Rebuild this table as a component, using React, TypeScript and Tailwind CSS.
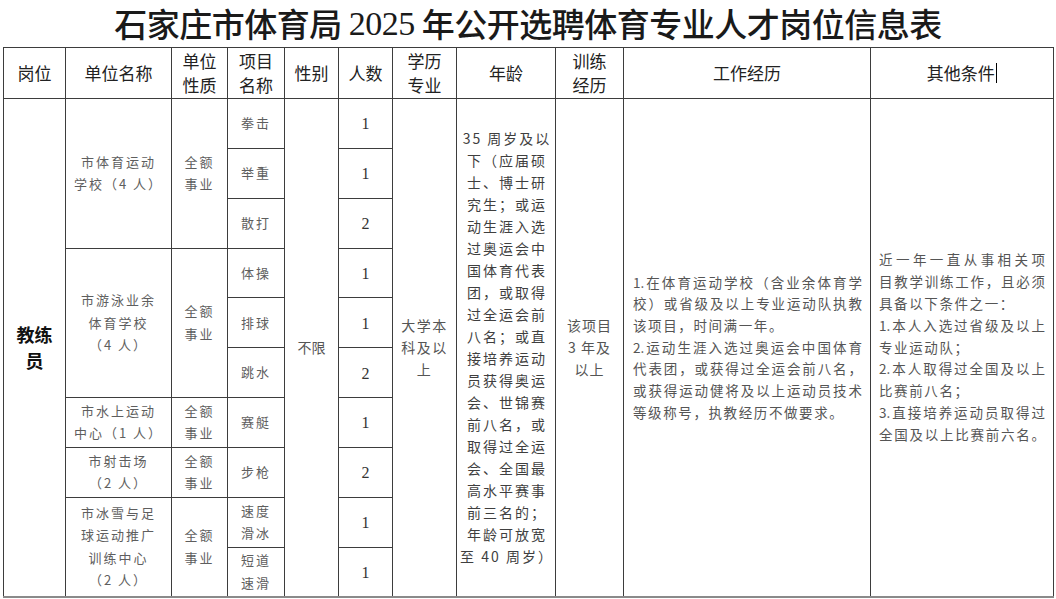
import React from "react";

const body = "text-[13px] tracking-[2px] leading-[22.5px] text-[#5e5e5e] text-center";
const cell = "border border-[#3d3d3d] align-middle p-0";

function Lines({ lines, className }: { lines: string[]; className?: string }) {
  return (
    <div className={className}>
      {lines.map((l, i) => (
        <div key={i}>{l}</div>
      ))}
    </div>
  );
}

// each line: [text, stretch to full width]
function Para({ lines, className }: { lines: [string, boolean][]; className: string }) {
  return (
    <div className={className}>
      {lines.map(([t, j], i) => (
        <div key={i} className={j ? "text-justify [text-align-last:justify] tracking-[0px]" : "tracking-[1.6px]"}>
          {t}
        </div>
      ))}
    </div>
  );
}

function Num({ n }: { n: string }) {
  return <span className="font-['Liberation_Serif',serif] text-[16px] text-[#333]">{n}</span>;
}

const ageLines = [
  "35 周岁及以",
  "下（应届硕",
  "士、博士研",
  "究生；或运",
  "动生涯入选",
  "过奥运会中",
  "国体育代表",
  "团，或取得",
  "过全运会前",
  "八名；或直",
  "接培养运动",
  "员获得奥运",
  "会、世锦赛",
  "前八名，或",
  "取得过全运",
  "会、全国最",
  "高水平赛事",
  "前三名的；",
  "年龄可放宽",
  "至 40 周岁）",
];

const workLines: [string, boolean][] = [
  ["1.在体育运动学校（含业余体育学", true],
  ["校）或省级及以上专业运动队执教", true],
  ["该项目，时间满一年。", false],
  ["2.运动生涯入选过奥运会中国体育", true],
  ["代表团，或获得过全运会前八名，", true],
  ["或获得运动健将及以上运动员技术", true],
  ["等级称号，执教经历不做要求。", false],
];

const otherLines: [string, boolean][] = [
  ["近一年一直从事相关项", true],
  ["目教学训练工作，且必须", true],
  ["具备以下条件之一：", false],
  ["1.本人入选过省级及以上", true],
  ["专业运动队；", false],
  ["2.本人取得过全国及以上", true],
  ["比赛前八名；", false],
  ["3.直接培养运动员取得过", true],
  ["全国及以上比赛前六名。", true],
];

export default function App() {
  const th = `${cell} text-[17px] leading-[24px] text-[#222] font-normal text-center`;
  const row = "h-[49.85px]";
  return (
    <div className="w-[1056px] h-[599px] bg-white overflow-hidden font-['Noto_Sans_CJK_SC','Noto_Sans',sans-serif]">
      <div className="h-[47px] flex items-center justify-center text-[33px] text-[#1a1a1a] font-medium tracking-[-0.5px]">
        石家庄市体育局 <span className="font-['Liberation_Serif',serif] mx-[7px] text-[34px]">2025</span> 年公开选聘体育专业人才岗位信息表
      </div>
      <table className="table-fixed border-collapse ml-[3px] w-[1050px] border-b-2 border-b-[#8a8a8a]">
        <colgroup>
          <col className="w-[62px]" />
          <col className="w-[106px]" />
          <col className="w-[56px]" />
          <col className="w-[57px]" />
          <col className="w-[54px]" />
          <col className="w-[54px]" />
          <col className="w-[64px]" />
          <col className="w-[99px]" />
          <col className="w-[68px]" />
          <col className="w-[247px]" />
          <col className="w-[183px]" />
        </colgroup>
        <thead>
          <tr className="h-[51px]">
            <th className={th}>岗位</th>
            <th className={th}>单位名称</th>
            <th className={th}>单位<br />性质</th>
            <th className={th}>项目<br />名称</th>
            <th className={th}>性别</th>
            <th className={th}>人数</th>
            <th className={th}>学历<br />专业</th>
            <th className={th}>年龄</th>
            <th className={th}>训练<br />经历</th>
            <th className={th}>工作经历</th>
            <th className={th}>
              其他条件
              <span className="inline-block w-[1.5px] h-[20px] bg-black align-[-3px] ml-px" />
            </th>
          </tr>
        </thead>
        <tbody>
          <tr className={row}>
            <td rowSpan={10} className={cell}>
              <Lines className="text-center text-[18px] leading-[26px] font-bold text-[#111]" lines={["教练", "员"]} />
            </td>
            <td rowSpan={3} className={cell}>
              <Lines className={body} lines={["市体育运动", "学校（4 人）"]} />
            </td>
            <td rowSpan={3} className={cell}>
              <Lines className={body} lines={["全额", "事业"]} />
            </td>
            <td className={cell}><Lines className={body} lines={["拳击"]} /></td>
            <td rowSpan={10} className={cell}>
              <div className="text-[14px] text-[#555] text-center">不限</div>
            </td>
            <td className={`${cell} text-center`}><Num n="1" /></td>
            <td rowSpan={10} className={cell}>
              <Lines className="text-[14px] tracking-[1.5px] leading-[22px] text-[#555] text-center" lines={["大学本", "科及以", "上"]} />
            </td>
            <td rowSpan={10} className={cell}>
              <Lines className="text-[14px] tracking-[2px] leading-[22px] text-[#3f3f3f] text-center pl-[2px]" lines={ageLines} />
            </td>
            <td rowSpan={10} className={cell}>
              <Lines className="text-[14px] tracking-[1px] leading-[22px] text-[#555] text-center" lines={["该项目", "3 年及", "以上"]} />
            </td>
            <td rowSpan={10} className={cell}>
              <Para className="w-[229px] ml-[9px] text-[13.5px] leading-[21.7px] text-[#555]" lines={workLines} />
            </td>
            <td rowSpan={10} className={cell}>
              <Para className="w-[166px] ml-[8px] text-[13.5px] leading-[21.8px] text-[#555]" lines={otherLines} />
            </td>
          </tr>
          <tr className={row}>
            <td className={cell}><Lines className={body} lines={["举重"]} /></td>
            <td className={`${cell} text-center`}><Num n="1" /></td>
          </tr>
          <tr className={row}>
            <td className={cell}><Lines className={body} lines={["散打"]} /></td>
            <td className={`${cell} text-center`}><Num n="2" /></td>
          </tr>
          <tr className={row}>
            <td rowSpan={3} className={cell}>
              <Lines className={body} lines={["市游泳业余", "体育学校", "（4 人）"]} />
            </td>
            <td rowSpan={3} className={cell}>
              <Lines className={body} lines={["全额", "事业"]} />
            </td>
            <td className={cell}><Lines className={body} lines={["体操"]} /></td>
            <td className={`${cell} text-center`}><Num n="1" /></td>
          </tr>
          <tr className={row}>
            <td className={cell}><Lines className={body} lines={["排球"]} /></td>
            <td className={`${cell} text-center`}><Num n="1" /></td>
          </tr>
          <tr className={row}>
            <td className={cell}><Lines className={body} lines={["跳水"]} /></td>
            <td className={`${cell} text-center`}><Num n="2" /></td>
          </tr>
          <tr className={row}>
            <td className={cell}><Lines className={body} lines={["市水上运动", "中心（1 人）"]} /></td>
            <td className={cell}><Lines className={body} lines={["全额", "事业"]} /></td>
            <td className={cell}><Lines className={body} lines={["赛艇"]} /></td>
            <td className={`${cell} text-center`}><Num n="1" /></td>
          </tr>
          <tr className={row}>
            <td className={cell}><Lines className={body} lines={["市射击场", "（2 人）"]} /></td>
            <td className={cell}><Lines className={body} lines={["全额", "事业"]} /></td>
            <td className={cell}><Lines className={body} lines={["步枪"]} /></td>
            <td className={`${cell} text-center`}><Num n="2" /></td>
          </tr>
          <tr className={row}>
            <td rowSpan={2} className={cell}>
              <Lines className={body} lines={["市冰雪与足", "球运动推广", "训练中心", "（2 人）"]} />
            </td>
            <td rowSpan={2} className={cell}>
              <Lines className={body} lines={["全额", "事业"]} />
            </td>
            <td className={cell}><Lines className={`${body} leading-[21.5px]`} lines={["速度", "滑冰"]} /></td>
            <td className={`${cell} text-center`}><Num n="1" /></td>
          </tr>
          <tr className={row}>
            <td className={cell}><Lines className={`${body} leading-[21.5px]`} lines={["短道", "速滑"]} /></td>
            <td className={`${cell} text-center`}><Num n="1" /></td>
          </tr>
        </tbody>
      </table>
    </div>
  );
}
